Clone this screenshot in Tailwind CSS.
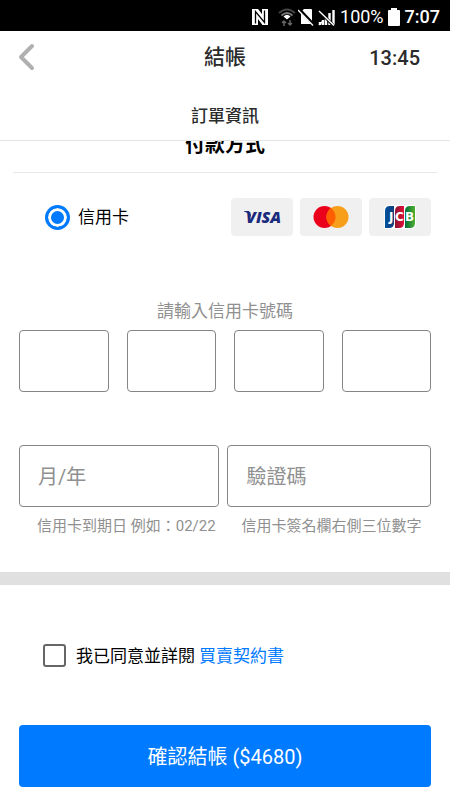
<!DOCTYPE html>
<html lang="zh-Hant">
<head>
  <meta charset="UTF-8">
  <meta name="viewport" content="width=device-width, initial-scale=1.0">
  <title>結帳</title>
  <script src="https://cdn.jsdelivr.net/npm/@tailwindcss/browser@4"></script>
</head>
<body class="bg-white text-black font-[Roboto,'Noto_Sans_CJK_TC',sans-serif]">

  <!-- 狀態列 -->
  <div class="flex h-[31px] items-center justify-end bg-black pt-[2px] pr-[10px] text-lg text-white">
    <svg class="mr-[9px] h-[18px] w-[18px]" viewBox="0 0 18 18" aria-label="NFC">
      <path d="M1 1H17V17H1Z" fill="#fff"/>
      <path d="M4.500 15.500V3.500L13.500 14.500V2.500" fill="none" stroke="#000" stroke-width="1.300"/>
      <path d="M7 1L11 6V1ZM7 17V11L11.500 17Z" fill="#000"/>
    </svg>
    <svg class="mr-[2px] h-[20px] w-[18px]" viewBox="0 0 18 20" fill="none" aria-label="Wi-Fi">
      <path d="M1 6Q9-1 17 6" stroke="#444" stroke-width="2"/>
      <path d="M3.500 8.500Q9 3.500 14.500 8.500" stroke="#777" stroke-width="2"/>
      <path d="M5.500 9.500Q9 6 12.500 9.500L9 12.500Z" fill="#fff"/>
      <path d="M6 19v-5M4 16l2-2 2 2M12 13v5M10 16l2 2 2-2" stroke="#666" stroke-width="1.500"/>
    </svg>
    <svg class="mr-[4px] h-[18px] w-[16px]" viewBox="0 0 16 18" aria-label="無 SIM 卡">
      <path d="M3 4L6 1H13Q14 1 14 2V16H3Z" fill="#fff"/>
      <path d="M1 1L16 17" stroke="#000" stroke-width="3"/>
      <path d="M0 2L15 17.500" stroke="#fff" stroke-width="1.300"/>
    </svg>
    <svg class="mr-[5px] h-[18px] w-[17px]" viewBox="0 0 17 18" aria-label="無訊號">
      <path d="M2 17v-3M5 17v-5M8 17v-8M11.500 17v-12M15.500 17v-15" stroke="#fff" stroke-width="2.400"/>
      <path d="M1 3L16 18" stroke="#000" stroke-width="3"/>
      <path d="M1 3L16 17.500M1 17L5 13" stroke="#fff" stroke-width="1.400"/>
    </svg>
    <span class="mr-[4px]">100%</span>
    <svg class="mr-[5px] h-[18px] w-[12px]" viewBox="0 0 12 18" aria-label="電池">
      <path d="M3 0H9V2H11Q12 2 12 3V17Q12 18 11 18H1Q0 18 0 17V3Q0 2 1 2H3Z" fill="#fff"/>
    </svg>
    <span class="font-medium">7:07</span>
  </div>

  <!-- 標題 -->
  <header class="border-b border-[#e4e4e4] text-[#2b2b2b]">
    <div class="grid h-[52px] grid-cols-3 items-center pr-[30px] pl-[18px]">
      <button type="button" aria-label="返回" class="justify-self-start">
        <svg class="h-[28px] w-[17px]" viewBox="0 0 17 28" fill="none" stroke="#b0b0b0" stroke-width="4" stroke-linecap="round" stroke-linejoin="round">
          <path d="M14 3L3 14L14 25"/>
        </svg>
      </button>
      <h1 class="pt-[2px] pl-[12px] text-center text-[21px] font-medium">結帳</h1>
      <span class="pt-[2px] text-right text-xl font-medium">13:45</span>
    </div>
    <h2 class="h-[57px] pt-[20px] text-center text-[17px] leading-[26px] font-medium">訂單資訊</h2>
  </header>

  <main class="overflow-hidden">
    <!-- 付款方式 -->
    <section class="px-[13px]">
      <h2 class="-mt-[10px] border-b border-[#e8e8e8] pb-[13px] text-center text-xl leading-[28px] font-bold">付款方式</h2>
      <div class="flex items-center justify-between pt-[25px] pr-[6px] pl-[32px]">
        <label class="flex items-center gap-[8px] text-[17px]">
          <input type="radio" name="pago" checked class="h-[25px] w-[25px] appearance-none rounded-full border-[3px] border-[#007aff] bg-[#007aff] shadow-[inset_0_0_0_3px_white]">
          <span class="pt-[2px]">信用卡</span>
        </label>
        <div class="flex gap-[7px]">
          <span class="flex h-[38px] w-[62px] items-center justify-center rounded-[4px] bg-[#f0f0f1]">
            <svg class="h-[16px] w-[40px] overflow-visible" viewBox="0 0 40 16" role="img" aria-label="VISA">
              <path d="M2 2H7L9 6L8.500 8Q6.500 3.500 2 2.500Z" fill="#1a2a7c"/>
              <text x="4" y="14" font-family="Open Sans, sans-serif" font-size="16" font-weight="800" font-style="italic" fill="#1a2a7c">VISA</text>
            </svg>
          </span>
          <span class="flex h-[38px] w-[62px] items-center justify-center rounded-[4px] bg-[#f0f0f1]">
            <svg class="h-[22px] w-[36px]" viewBox="0 0 36 22" role="img" aria-label="Mastercard">
              <circle cx="11.500" cy="11" r="11" fill="#eb001b"/>
              <circle cx="24.500" cy="11" r="11" fill="#f79e1b"/>
              <path d="M18 2.100a11 11 0 0 1 0 17.800a11 11 0 0 1 0-17.800Z" fill="#ff5f00"/>
            </svg>
          </span>
          <span class="flex h-[38px] w-[62px] items-center justify-center rounded-[4px] bg-[#f0f0f1]">
            <svg class="h-[24px] w-[32px]" viewBox="0 0 32 24" role="img" aria-label="JCB">
              <defs>
                <linearGradient id="azul"><stop stop-color="#00529f"/><stop offset="1" stop-color="#123c7b"/></linearGradient>
                <linearGradient id="rojo"><stop stop-color="#8c1430"/><stop offset="1" stop-color="#e0103a"/></linearGradient>
                <linearGradient id="verde"><stop stop-color="#00703c"/><stop offset="1" stop-color="#52b030"/></linearGradient>
              </defs>
              <path d="M5 0H32V19Q32 24 27 24H0V5Q0 0 5 0Z" fill="#fff"/>
              <path d="M6 1H10V18Q10 23 5 23H1V6Q1 1 6 1Z" fill="url(#azul)"/>
              <path d="M16 1H20V18Q20 23 15 23H11V6Q11 1 16 1Z" fill="url(#rojo)"/>
              <path d="M26 1H31V18Q31 23 26 23H21V6Q21 1 26 1Z" fill="url(#verde)"/>
              <text x="5 11 21" y="16" font-family="DejaVu Sans, sans-serif" font-size="12" font-weight="700" fill="#fff">JCB</text>
            </svg>
          </span>
        </div>
      </div>
    </section>

    <!-- 卡片資料 -->
    <section class="px-[19px] pt-[63px] pb-[34px] text-[#909090]">
      <fieldset>
        <legend class="mx-auto pb-[7px] text-[17px] leading-[24px]">請輸入信用卡號碼</legend>
        <div class="grid grid-cols-4 gap-[18px]">
          <input type="text" inputmode="numeric" maxlength="4" aria-label="卡號第一組" class="h-[62px] min-w-0 rounded-[4px] border border-[#858585] text-center text-xl">
          <input type="text" inputmode="numeric" maxlength="4" aria-label="卡號第二組" class="h-[62px] min-w-0 rounded-[4px] border border-[#858585] text-center text-xl">
          <input type="text" inputmode="numeric" maxlength="4" aria-label="卡號第三組" class="h-[62px] min-w-0 rounded-[4px] border border-[#858585] text-center text-xl">
          <input type="text" inputmode="numeric" maxlength="4" aria-label="卡號第四組" class="h-[62px] min-w-0 rounded-[4px] border border-[#858585] text-center text-xl">
        </div>
      </fieldset>
      <div class="grid grid-cols-[200fr_203fr] gap-[8px] pt-[53px]">
        <div>
          <input type="text" id="fecha" placeholder="月/年" class="h-[62px] w-full rounded-[4px] border border-[#858585] px-[18px] pt-[2px] text-xl placeholder:text-[#909090]">
          <label for="fecha" class="block pt-[7px] pl-[18px] text-[15px] leading-[24px] whitespace-nowrap">信用卡到期日 例如：02/22</label>
        </div>
        <div>
          <input type="text" id="codigo" placeholder="驗證碼" class="h-[62px] w-full rounded-[4px] border border-[#858585] px-[18px] pt-[2px] text-xl placeholder:text-[#909090]">
          <label for="codigo" class="block pt-[7px] pl-[14px] text-[15px] leading-[24px] whitespace-nowrap">信用卡簽名欄右側三位數字</label>
        </div>
      </div>
    </section>

    <!-- 同意條款 -->
    <section class="border-t-[13px] border-[#e0e0e0] px-[19px] pt-[57px] pb-[12px]">
      <div class="flex items-center pl-[24px] text-[17px] leading-[24px]">
        <input type="checkbox" id="acepto" class="mr-[10px] h-[23px] w-[23px] appearance-none rounded-[3px] border-2 border-[#666]">
        <label for="acepto" class="pt-[2px]">我已同意並詳閱</label>
        <a href="#" class="pt-[2px] pl-[4px] text-[#007aff]">買賣契約書</a>
      </div>
      <button type="button" class="mt-[57px] h-[62px] w-full rounded-[4px] bg-[#007aff] pt-[2px] text-xl text-white">確認結帳 ($4680)</button>
    </section>
  </main>

</body>
</html>
